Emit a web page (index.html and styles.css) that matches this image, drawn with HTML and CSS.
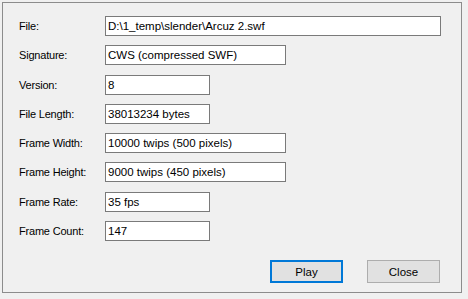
FILE: index.html
```html
<!DOCTYPE html>
<html lang="en">
<head>
    <meta charset="UTF-8">
    <title>SWF Info</title>
    <link rel="stylesheet" href="styles.css">
</head>
<body>

    <div class="panel">
        <div class="fields">
            <label>File:</label>
            <div class="box wide">D:\1_temp\slender\Arcuz 2.swf</div>

            <label>Signature:</label>
            <div class="box medium">CWS (compressed SWF)</div>

            <label>Version:</label>
            <div class="box short">8</div>

            <label>File Length:</label>
            <div class="box short">38013234 bytes</div>

            <label>Frame Width:</label>
            <div class="box medium">10000 twips (500 pixels)</div>

            <label>Frame Height:</label>
            <div class="box medium">9000 twips (450 pixels)</div>

            <label>Frame Rate:</label>
            <div class="box short">35 fps</div>

            <label>Frame Count:</label>
            <div class="box short">147</div>
        </div>

        <div class="buttons">
            <button class="btn default">Play</button>
            <button class="btn">Close</button>
        </div>
    </div>

</body>
</html>
```

FILE: styles.css
```css
body {
    margin: 0;
    padding: 2px;
    background-color: #f0f0f0;
    font-family: "Liberation Sans", Arial, sans-serif;
    font-size: 11px;
    color: #000;
}

.panel {
    width: 458px;
    height: 289px;
    border: 1px solid #8c8c8c;
    box-sizing: content-box;
}

.fields {
    display: grid;
    grid-template-columns: 86px auto;
    grid-auto-rows: 20px;
    row-gap: 9.3px;
    padding: 13px 0 0 16px;
    justify-items: start;
    align-items: center;
}

.fields label {
    line-height: 20px;
    letter-spacing: -0.2px;
}

.box {
    box-sizing: border-box;
    height: 20px;
    line-height: 18px;
    padding: 0 2px;
    font-size: 11.5px;
    background-color: #fff;
    border: 1px solid #7a7a7a;
    white-space: nowrap;
    overflow: hidden;
}

.wide {
    width: 336px;
}

.medium {
    width: 181px;
}

.short {
    width: 105px;
}

.buttons {
    display: flex;
    justify-content: flex-end;
    gap: 24px;
    padding: 19px 21px 0 0;
}

.btn {
    box-sizing: border-box;
    width: 73px;
    height: 23px;
    font-family: inherit;
    font-size: 11.5px;
    color: #000;
    background-color: #e1e1e1;
    border: 1px solid #adadad;
    padding: 0;
}

.btn.default {
    border: 2px solid #0078d7;
}
```
